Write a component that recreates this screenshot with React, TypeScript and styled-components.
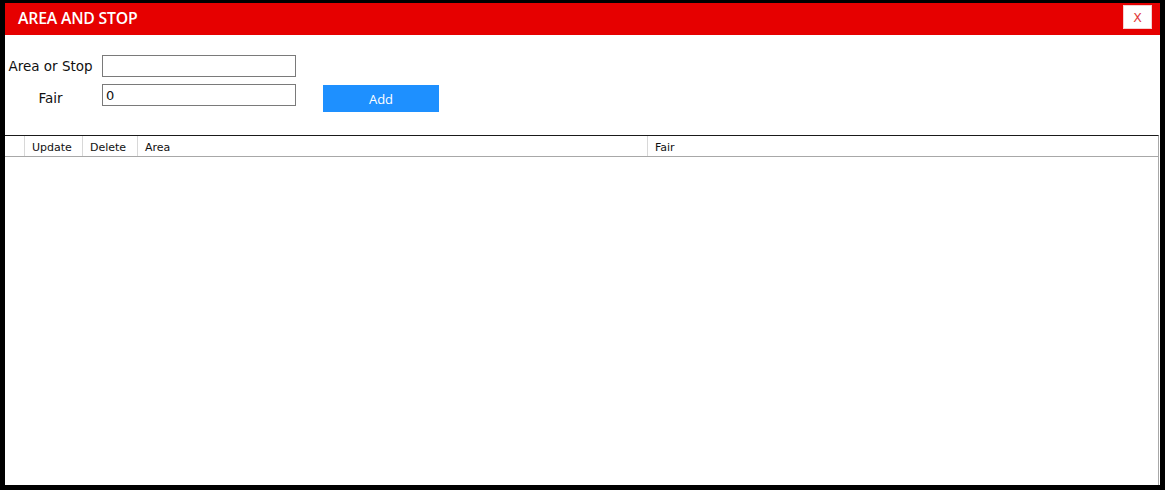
import React from "react";
import styled, { createGlobalStyle } from "styled-components";

const Global = createGlobalStyle`
  html, body { margin: 0; padding: 0; background: #fff; }
  #root { width: 1165px; height: 490px; }
  * { box-sizing: border-box; }
`;

const Frame = styled.div`
  width: 1165px;
  height: 490px;
  background: #000;
  padding: 3px 5px 5px 5px;
  display: flex;
`;

const Panel = styled.div`
  flex: 1;
  background: #fff;
  display: flex;
  flex-direction: column;
  min-width: 0;
`;

const TitleBar = styled.div`
  height: 32px;
  background: #e60000;
  display: flex;
  align-items: flex-start;
  justify-content: space-between;
  padding: 0 8px 0 13px;
`;

const Title = styled.h1`
  margin: 0;
  line-height: 30px;
  color: #fff;
  font-family: "Open Sans", "Noto Sans", sans-serif;
  font-weight: 600;
  font-size: 15.8px;
  letter-spacing: -0.2px;
`;

const CloseButton = styled.button`
  margin-top: 2px;
  width: 29px;
  height: 24px;
  background: #fff;
  border: 1px solid #f3d0d0;
  color: #e23b3b;
  font-family: "DejaVu Sans", Verdana, sans-serif;
  font-size: 12.5px;
  line-height: 1;
  padding: 2px 0 0 0;
  cursor: pointer;
`;

const Form = styled.div`
  height: 100px;
  padding: 20px 0 0 0;
  display: grid;
  grid-template-columns: 91px 194px 116px;
  grid-template-rows: 22px 22px;
  column-gap: 6px;
  row-gap: 7px;
  align-content: start;
`;

const Label = styled.label<{ $offset?: number }>`
  font-family: "DejaVu Sans", Verdana, sans-serif;
  font-size: 13.5px;
  color: #111;
  text-align: center;
  align-self: center;
  margin-top: ${(p) => p.$offset ?? 0}px;
`;

const TextInput = styled.input`
  width: 194px;
  height: 22px;
  border: 1px solid #7a7a7a;
  padding: 0 3px;
  font-family: "DejaVu Sans", Verdana, sans-serif;
  font-size: 13px;
  color: #111;
  outline: none;
`;

const AddButton = styled.button`
  grid-column: 3;
  grid-row: 2;
  margin-left: 21px;
  margin-top: 1px;
  width: 116px;
  height: 27px;
  background: #1e90ff;
  border: none;
  color: #fff;
  font-family: "Open Sans", "Noto Sans", sans-serif;
  font-size: 13px;
  cursor: pointer;
`;

const Table = styled.div`
  flex: 1;
  margin-right: 1px;
  border-top: 1px solid #1a1a1a;
  border-right: 1px solid #a8a8a8;
  display: flex;
  flex-direction: column;
`;

const HeaderRow = styled.div`
  display: flex;
  height: 21px;
  border-bottom: 1px solid #a8a8a8;
`;

const HeaderCell = styled.div<{ $w?: number }>`
  ${(p) => (p.$w ? `width: ${p.$w}px; flex: none;` : `flex: 1;`)}
  border-right: 1px solid #d8d8d8;
  padding: 3px 0 0 7px;
  font-family: "DejaVu Sans", Tahoma, sans-serif;
  font-size: 11px;
  line-height: 17px;
  color: #111;
  white-space: nowrap;
  &:last-child { border-right: none; }
`;

const Body = styled.div`
  flex: 1;
  background: #fff;
`;

export default function App() {
  return (
    <>
      <Global />
      <Frame>
        <Panel>
          <TitleBar>
            <Title>AREA AND STOP</Title>
            <CloseButton>X</CloseButton>
          </TitleBar>
          <Form>
            <Label>Area or Stop</Label>
            <TextInput defaultValue="" />
            <span />
            <Label $offset={5}>Fair</Label>
            <TextInput defaultValue="0" />
            <AddButton>Add</AddButton>
          </Form>
          <Table>
            <HeaderRow>
              <HeaderCell $w={20} />
              <HeaderCell $w={58}>Update</HeaderCell>
              <HeaderCell $w={55}>Delete</HeaderCell>
              <HeaderCell $w={510}>Area</HeaderCell>
              <HeaderCell>Fair</HeaderCell>
            </HeaderRow>
            <Body />
          </Table>
        </Panel>
      </Frame>
    </>
  );
}
